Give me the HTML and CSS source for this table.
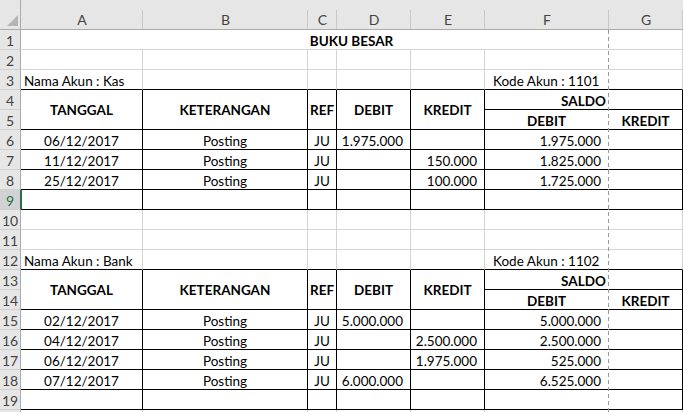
FILE: index.html
```html
<!DOCTYPE html>
<html>
<head>
<meta charset="utf-8">
<link rel="stylesheet" href="styles.css">
</head>
<body>
<div class="sheet">
  <div class="corner"><svg width="11" height="11" viewBox="0 0 11 11"><polygon points="11,0 11,11 0,11" fill="#b4b4b4"/></svg></div>
  <div class="h">A</div><div class="h">B</div><div class="h">C</div><div class="h">D</div><div class="h">E</div><div class="h">F</div><div class="h">G</div>

  <div class="r">1</div><div class="c span7 ctr b">BUKU BESAR</div>

  <div class="r">2</div><div class="c"></div><div class="c"></div><div class="c"></div><div class="c"></div><div class="c"></div><div class="c f"></div><div class="c"></div>

  <div class="r">3</div><div class="c tb lt">Nama Akun : Kas</div><div class="c tb"></div><div class="c tb"></div><div class="c tb"></div><div class="c tb"></div><div class="c tb f lt2">Kode Akun : 1101</div><div class="c tb"></div>

  <div class="r">4</div><div class="c t rs2 ctr b">TANGGAL</div><div class="c t rs2 ctr b">KETERANGAN</div><div class="c t rs2 ctr b">REF</div><div class="c t rs2 ctr b">DEBIT</div><div class="c t rs2 ctr b">KREDIT</div><div class="c t cs2 ctr b">SALDO</div>
  <div class="r">5</div><div class="c tb f ctr b">DEBIT</div><div class="c t ctr b">KREDIT</div>

  <div class="r">6</div><div class="c t ctr">06/12/2017</div><div class="c t ctr">Posting</div><div class="c t ctr">JU</div><div class="c t rt">1.975.000</div><div class="c t rt"></div><div class="c tb f rt">1.975.000</div><div class="c t"></div>
  <div class="r">7</div><div class="c t ctr">11/12/2017</div><div class="c t ctr">Posting</div><div class="c t ctr">JU</div><div class="c t rt"></div><div class="c t rt">150.000</div><div class="c tb f rt">1.825.000</div><div class="c t"></div>
  <div class="r">8</div><div class="c t ctr">25/12/2017</div><div class="c t ctr">Posting</div><div class="c t ctr">JU</div><div class="c t rt"></div><div class="c t rt">100.000</div><div class="c tb f rt">1.725.000</div><div class="c t"></div>
  <div class="r sel">9</div><div class="c t active"></div><div class="c t"></div><div class="c t"></div><div class="c t"></div><div class="c t"></div><div class="c tb f"></div><div class="c t"></div>

  <div class="r">10</div><div class="c"></div><div class="c"></div><div class="c"></div><div class="c"></div><div class="c"></div><div class="c f"></div><div class="c"></div>
  <div class="r">11</div><div class="c"></div><div class="c"></div><div class="c"></div><div class="c"></div><div class="c"></div><div class="c f"></div><div class="c"></div>

  <div class="r">12</div><div class="c tb lt">Nama Akun : Bank</div><div class="c tb"></div><div class="c tb"></div><div class="c tb"></div><div class="c tb"></div><div class="c tb f lt2">Kode Akun : 1102</div><div class="c tb"></div>

  <div class="r">13</div><div class="c t rs2 ctr b">TANGGAL</div><div class="c t rs2 ctr b">KETERANGAN</div><div class="c t rs2 ctr b">REF</div><div class="c t rs2 ctr b">DEBIT</div><div class="c t rs2 ctr b">KREDIT</div><div class="c t cs2 ctr b">SALDO</div>
  <div class="r">14</div><div class="c tb f ctr b">DEBIT</div><div class="c t ctr b">KREDIT</div>

  <div class="r">15</div><div class="c t ctr">02/12/2017</div><div class="c t ctr">Posting</div><div class="c t ctr">JU</div><div class="c t rt">5.000.000</div><div class="c t rt"></div><div class="c tb f rt">5.000.000</div><div class="c t"></div>
  <div class="r">16</div><div class="c t ctr">04/12/2017</div><div class="c t ctr">Posting</div><div class="c t ctr">JU</div><div class="c t rt"></div><div class="c t rt">2.500.000</div><div class="c tb f rt">2.500.000</div><div class="c t"></div>
  <div class="r">17</div><div class="c t ctr">06/12/2017</div><div class="c t ctr">Posting</div><div class="c t ctr">JU</div><div class="c t rt"></div><div class="c t rt">1.975.000</div><div class="c tb f rt">525.000</div><div class="c t"></div>
  <div class="r">18</div><div class="c t ctr">07/12/2017</div><div class="c t ctr">Posting</div><div class="c t ctr">JU</div><div class="c t rt">6.000.000</div><div class="c t rt"></div><div class="c tb f rt">6.525.000</div><div class="c t"></div>
  <div class="r">19</div><div class="c t"></div><div class="c t"></div><div class="c t"></div><div class="c t"></div><div class="c t"></div><div class="c tb f"></div><div class="c t"></div>

  <div class="r"></div><div class="c"></div><div class="c"></div><div class="c"></div><div class="c"></div><div class="c"></div><div class="c f"></div><div class="c"></div>

  <div class="pagebreak"></div>
</div>
</body>
</html>
```
FILE: styles.css
```css
html, body {
  margin: 0;
  padding: 0;
  background: #ffffff;
}

.sheet {
  position: relative;
  display: grid;
  grid-template-columns: 21px 122px 165px 29px 74px 74px 124px 74px;
  grid-template-rows: 30px repeat(19, 20px) 2px;
  width: 683px;
  height: 412px;
  overflow: hidden;
  font-family: Lato, "Open Sans", sans-serif;
  font-size: 13.5px;
  color: #000;
}

.corner {
  background: #e6e6e6;
  border-right: 1px solid #ababab;
  border-bottom: 1px solid #ababab;
  box-sizing: border-box;
  display: flex;
  align-items: flex-end;
  justify-content: flex-end;
  padding: 0 2px 3px 0;
}

.corner svg {
  display: block;
}

.h {
  box-sizing: border-box;
  background-color: #e6e6e6;
  background-image: linear-gradient(#c8c8c8, #c8c8c8);
  background-repeat: no-repeat;
  background-position: right bottom;
  background-size: 1px 19px;
  border-bottom: 1px solid #ababab;
  display: flex;
  align-items: center;
  justify-content: center;
  padding-top: 10px;
  color: #444;
  font-size: 14px;
}

.r {
  box-sizing: border-box;
  background: #e6e6e6;
  border-right: 1px solid #ababab;
  border-bottom: 1px solid #d0d0d0;
  display: flex;
  align-items: center;
  justify-content: center;
  padding-top: 2px;
  color: #444;
  font-size: 14px;
  overflow: hidden;
}

.r.sel {
  background: #d2d2d2;
  color: #217346;
  border-right-color: #217346;
}

.c {
  box-sizing: border-box;
  border-right: 1px solid #d4d4d4;
  border-bottom: 1px solid #d4d4d4;
  display: flex;
  align-items: center;
  padding-top: 2px;
  white-space: nowrap;
  overflow: visible;
  min-width: 0;
}

.c.f {
  border-right-color: #ffffff;
}

.c.t {
  border-right-color: #000;
  border-bottom-color: #000;
}

.c.tb {
  border-bottom-color: #000;
}

.c.active {
  box-shadow: inset 1px 0 0 #217346;
}

.span7 {
  grid-column: span 7;
  border-right-color: #d4d4d4;
}

.rs2 {
  grid-row: span 2;
  padding-top: 0;
}

.cs2 {
  grid-column: span 2;
}

.ctr {
  justify-content: center;
}

.rt {
  justify-content: flex-end;
  padding-right: 7px;
}

.lt {
  padding-left: 3px;
}

.lt2 {
  padding-left: 8px;
}

.b {
  font-weight: 700;
}

.pagebreak {
  position: absolute;
  left: 608px;
  top: 30px;
  width: 1px;
  height: 382px;
  background: repeating-linear-gradient(to bottom, #9a9a9a 0, #9a9a9a 4px, transparent 4px, transparent 7px);
}
```
